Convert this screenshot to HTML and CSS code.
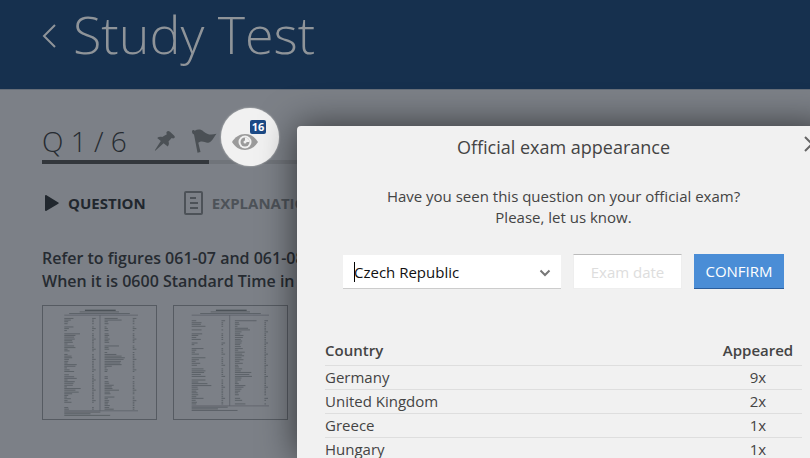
FILE: index.html
```html
<!DOCTYPE html>
<html lang="en">
<head>
    <meta charset="UTF-8">
    <meta name="viewport" content="width=device-width, initial-scale=1.0">
    <title>Study Test</title>
    <link rel="stylesheet" href="styles.css">
</head>
<body>
    <header class="top-bar">
        <a href="#" class="back-link" aria-label="Back">
            <svg width="14" height="26" viewBox="0 0 14 26"><path d="M13 2L2 13l11 11" fill="none" stroke="currentColor" stroke-width="2"/></svg>
        </a>
        <h1>Study Test</h1>
    </header>

    <main class="content">
        <div class="question-bar">
            <span class="counter">Q 1 / 6</span>
            <button class="icon-btn pin-btn" aria-label="Pin">
                <svg width="22" height="22" viewBox="0 0 22 22"><path fill="currentColor" d="M13 1.500c1-.9 1.900-.6 3 .3l4 3.600c1 1 1.200 2 .2 2.700-.9.6-1.700.3-2.500-.1L14.500 11.500c.7 1.700.6 3.500-.8 5.100L9.600 13.300 1.300 20.700.9 20.300 6.800 10.900 3.200 7.900c1.500-1.300 3.300-1.500 5-.9L12.900 4.200c-.6-.9-.8-1.900.1-2.700z"/></svg>
            </button>
            <button class="icon-btn flag-btn" aria-label="Flag">
                <svg width="25" height="24" viewBox="0 0 25 24"><path fill="currentColor" d="M0 2.500C0 .8 2 .5 2.700 1.700 6 .1 9 .2 11.500 2.500c3.500 3.200 7.500 3.800 13 2.300-2.500 3-4 7.600-7.500 8.700-3.500 1-5.500-2.200-9.500-.5l-1.200.7L8.500 23l-3 .8L2 5.500C.8 5.200 0 4 0 2.500z"/></svg>
            </button>
        </div>
        <div class="progress"><div class="progress-done"></div></div>

        <nav class="tabs">
            <a href="#" class="tab active">
                <svg width="14" height="16" viewBox="0 0 14 16"><path fill="currentColor" d="M0 1c0-1 .8-1.200 1.500-.8l11.800 7.200c.7.4.7.9 0 1.300L1.500 15.800C.8 16.200 0 16 0 15z"/></svg>
                QUESTION
            </a>
            <a href="#" class="tab">
                <svg width="19" height="24" viewBox="0 0 19 24"><path fill="none" stroke="currentColor" stroke-width="2" d="M2 1h15q1 0 1 1v20q0 1-1 1H2q-1 0-1-1V2q0-1 1-1zM6 7h6M6 12h8M6 17h8"/></svg>
                EXPLANATION
            </a>
        </nav>

        <p class="question-text">Refer to figures 061-07 and 061-08.<br>When it is 0600 Standard Time in</p>

        <div class="figures">
            <a href="#" class="figure" aria-label="Figure 061-07"><svg id="figure1" viewBox="0 0 345 345"></svg></a>
            <a href="#" class="figure" aria-label="Figure 061-08"><svg id="figure2" viewBox="0 0 345 345"></svg></a>
        </div>
    </main>

    <button class="seen-btn" aria-label="Seen on exam">
        <svg width="26" height="16" viewBox="0 0 26 16">
            <path fill="#9b9b9b" d="M0 8C3 3 7.500 0 13 0s10 3 13 8c-3 5-7.500 8-13 8S3 13 0 8z"/>
            <circle cx="13" cy="8" r="6.500" fill="#f1f1f1"/>
            <circle cx="13" cy="8" r="4.500" fill="#9b9b9b"/>
            <path d="M13 8V3.500A4.500 4.500 0 0 1 17.500 8z" fill="#f1f1f1"/>
            <circle cx="13" cy="8" r="1.500" fill="#f1f1f1"/>
        </svg>
        <span class="badge">16</span>
    </button>

    <div class="modal" role="dialog" aria-labelledby="modal-title">
        <button class="close-btn" aria-label="Close">
            <svg width="16" height="16" viewBox="0 0 16 16"><path d="M1 1l14 14M15 1L1 15" stroke="currentColor" stroke-width="2"/></svg>
        </button>
        <h2 id="modal-title">Official exam appearance</h2>
        <p>Have you seen this question on your official exam?<br>Please, let us know.</p>

        <form class="exam-form">
            <div class="select-wrap">
                <select aria-label="Country">
                    <option>Czech Republic</option>
                </select>
                <span class="caret"></span>
                <svg class="arrow" width="12" height="8" viewBox="0 0 12 8"><path d="M1.500 1.500L6 6l4.500-4.500" fill="none" stroke="currentColor" stroke-width="2"/></svg>
            </div>
            <input type="text" placeholder="Exam date" aria-label="Exam date">
            <button type="button" class="confirm-btn">CONFIRM</button>
        </form>

        <table>
            <thead>
                <tr><th>Country</th><th>Appeared</th></tr>
            </thead>
            <tbody>
                <tr><td>Germany</td><td>9x</td></tr>
                <tr><td>United Kingdom</td><td>2x</td></tr>
                <tr><td>Greece</td><td>1x</td></tr>
                <tr><td>Hungary</td><td>1x</td></tr>
            </tbody>
        </table>
    </div>

    <script>
        // row widths of each column, 0 is an empty row
        const figure1 = {
            left: [28, 20, 12, 10, 0, 28, 14, 8, 0, 48, 34, 30, 32, 24, 26, 10, 30, 34, 10, 16, 0, 10, 22, 24, 14, 12, 10, 38, 34, 8, 16, 30, 0, 14, 30, 38, 10, 32, 28, 26, 8, 50, 34, 44, 24, 12, 8, 20, 10, 22, 0, 0, 12, 14],
            right: [40, 52, 10, 12, 0, 6, 10, 12, 0, 12, 14, 10, 16, 12, 14, 0, 44, 12, 14, 0, 8, 36, 52, 62, 58, 50, 48, 52, 22, 6, 10, 8, 0, 0, 10, 10, 0, 12, 14, 28, 22, 24, 44, 16, 18, 0, 30, 10, 14, 12, 10, 16, 14, 28],
            x: [65, 188], nums: [150, 274], middle: 174, top: 38, bottom: 320
        };
        const figure2 = {
            left: [14, 30, 28, 42, 0, 30, 0, 32, 20, 14, 28, 0, 18, 8, 0, 36, 14, 10, 22, 0, 42, 22, 12, 26, 16, 0, 36, 42, 38, 28, 42, 0, 42, 20, 48, 60, 18, 20, 14, 18, 20, 14, 36, 12, 16, 14],
            right: [66, 12, 14, 8, 40, 46, 20, 16, 26, 24, 18, 22, 20, 16, 18, 24, 10, 30, 22, 28, 20, 26, 14, 24, 10, 12, 22, 18, 50, 44, 52, 20, 18, 8, 12, 32, 26, 20, 16, 10, 12, 0, 16, 22, 0, 32],
            x: [54, 186], nums: [145, 276], middle: 170, top: 45, bottom: 305
        };

        function drawFigure(id, data) {
            const rows = [];
            const step = (data.bottom - data.top) / data.left.length;
            [data.left, data.right].forEach((column, c) => {
                column.forEach((width, i) => {
                    if (!width) return;
                    const y = Math.round(data.top + i * step);
                    rows.push(`M${data.x[c]} ${y}h${width}M${data.nums[c]} ${y}h${i % 6 ? 5 : 11}`);
                });
            });
            const left = data.x[0];
            document.getElementById(id).innerHTML =
                `<path class="fig-title" d="M128 13h94"/>` +
                `<path class="fig-text" d="M112 18h120M80 23h185${rows.join('')}"/>` +
                `<path class="fig-rule" d="M${left} 28H290M${data.middle} 28V${data.bottom}M${left} ${data.bottom}H290"/>` +
                `<path class="fig-text" d="M${left} ${data.bottom + 4}h110M${left} ${data.bottom + 9}h80M${left} ${data.bottom + 14}h140"/>`;
        }

        drawFigure('figure1', figure1);
        drawFigure('figure2', figure2);
    </script>
</body>
</html>
```
FILE: styles.css
```css
* {
    box-sizing: border-box;
}
body {
    font-family: 'Open Sans', 'Noto Sans', sans-serif;
    font-size: 15px;
    margin: 0;
    min-height: 100vh;
    background: #7c8087;
    color: #262b31;
    overflow: hidden;
}
button {
    font-family: inherit;
    border: none;
    background: none;
    padding: 0;
    cursor: pointer;
}
a {
    color: inherit;
    text-decoration: none;
}
svg {
    display: block;
}
.top-bar {
    display: flex;
    align-items: center;
    gap: 17px;
    height: 90px;
    padding: 0 42px 18px;
    background: #16304e;
    border-bottom: 1px solid #656d78;
    color: #8f9499;
}
h1 {
    margin: 0;
    font-size: 52px;
    font-weight: 300;
    line-height: 64px;
    padding-bottom: 4px;
}
.content {
    padding: 32px 42px 0;
}
.question-bar {
    display: flex;
    align-items: center;
    height: 38px;
}
.counter {
    width: 112px;
    font-size: 28px;
    font-weight: 300;
    white-space: nowrap;
}
.icon-btn {
    color: #4b5055;
}
.flag-btn {
    margin-left: 16px;
}
.progress {
    height: 4px;
    background: #70747a;
}
.progress-done {
    width: 167px;
    height: 100%;
    background: #33373c;
}
.tabs {
    display: flex;
    gap: 38px;
    margin-top: 27px;
}
.tab {
    display: flex;
    align-items: center;
    gap: 9px;
    height: 24px;
    font-weight: 700;
    color: #4d5258;
}
.tab.active {
    padding-left: 3px;
    color: #21272e;
}
.question-text {
    margin: 32px 0 12px;
    font-size: 16px;
    font-weight: 600;
    line-height: 23px;
    white-space: nowrap;
}
.figures {
    display: flex;
    gap: 16px;
}
.figure {
    width: 115px;
    height: 115px;
    border: 1px solid #565b62;
}
.fig-title {
    stroke: #3c4148;
    stroke-width: 3;
}
.fig-text {
    fill: none;
    stroke: #4c5158;
    stroke-width: 2;
}
.fig-rule {
    fill: none;
    stroke: #565b62;
    stroke-width: 2;
}
/* highlighted button over the dimmed page */
.seen-btn {
    position: absolute;
    left: 221px;
    top: 108px;
    width: 58px;
    height: 58px;
    padding: 10px 0 0 11px;
    border-radius: 50%;
    background: #f1f1f1;
    box-shadow: 0 0 2px #d0d0d0;
}
.badge {
    position: absolute;
    left: 29px;
    top: 12px;
    width: 16px;
    border-radius: 2px;
    background: #1c4a86;
    color: #fff;
    font-size: 11px;
    font-weight: 700;
    line-height: 14px;
    text-align: center;
}
.modal {
    position: absolute;
    left: 297px;
    right: -20px;
    top: 126px;
    bottom: 0;
    padding: 8px 28px 0;
    overflow: hidden;
    border-radius: 4px 0 0 0;
    background: #f1f1f1;
    box-shadow: 0 0 36px rgba(0, 0, 0, 0.6);
    color: #444;
    text-align: center;
}
.close-btn {
    position: absolute;
    right: 10px;
    top: 10px;
    color: #666;
}
h2 {
    margin: 0;
    font-size: 18px;
    font-weight: 400;
    line-height: 26px;
}
.modal p {
    margin: 26px 0;
    line-height: 21px;
}
.exam-form {
    display: flex;
    justify-content: center;
    gap: 12px;
}
.select-wrap {
    position: relative;
    width: 218px;
}
select {
    appearance: none;
    width: 100%;
    height: 35px;
    padding: 0 11px;
    border: none;
    border-top: 1px solid #f1f1f1;
    border-bottom: 1px solid #ccc;
    border-radius: 0;
    background: #fff;
    color: #111;
    font-family: inherit;
    font-size: 15px;
}
.caret {
    position: absolute;
    left: 11px;
    top: 8px;
    width: 1px;
    height: 20px;
    background: #000;
}
.arrow {
    position: absolute;
    right: 10px;
    top: 15px;
    color: #777;
}
input {
    width: 109px;
    height: 35px;
    padding: 0;
    border: 1px solid #eee;
    border-top-color: #bbb;
    background: #fff;
    font-family: inherit;
    font-size: 15px;
    text-align: center;
}
input::placeholder {
    color: #ddd;
}
.confirm-btn {
    width: 90px;
    height: 35px;
    border-bottom: 1px solid #2a5d9c;
    background: #4a8dd6;
    color: #fff;
    font-size: 15px;
}
table {
    width: 100%;
    margin-top: 50px;
    border-collapse: collapse;
    line-height: 23px;
}
th {
    font-weight: 600;
}
th, td {
    padding: 0;
    border-bottom: 1px solid #dedede;
}
th:first-child, td:first-child {
    text-align: left;
}
th:last-child, td:last-child {
    width: 88px;
}
thead th {
    padding-bottom: 3px;
}
```
